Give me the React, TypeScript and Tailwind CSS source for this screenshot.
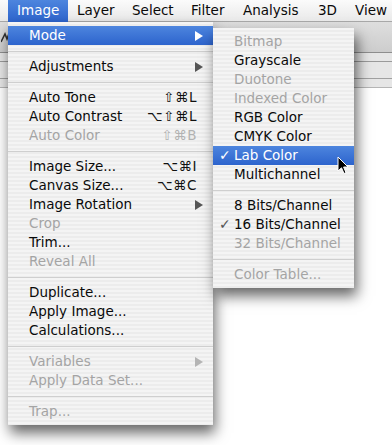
import React from "react";

type Item =
  | { sep: true }
  | {
      sep?: false;
      label: string;
      shortcut?: string;
      arrow?: boolean;
      disabled?: boolean;
      active?: boolean;
      check?: boolean;
    };

const mainItems: Item[] = [
  { label: "Mode", arrow: true, active: true },
  { sep: true },
  { label: "Adjustments", arrow: true },
  { sep: true },
  { label: "Auto Tone", shortcut: "⇧⌘L" },
  { label: "Auto Contrast", shortcut: "⌥⇧⌘L" },
  { label: "Auto Color", shortcut: "⇧⌘B", disabled: true },
  { sep: true },
  { label: "Image Size...", shortcut: "⌥⌘I" },
  { label: "Canvas Size...", shortcut: "⌥⌘C" },
  { label: "Image Rotation", arrow: true },
  { label: "Crop", disabled: true },
  { label: "Trim..." },
  { label: "Reveal All", disabled: true },
  { sep: true },
  { label: "Duplicate..." },
  { label: "Apply Image..." },
  { label: "Calculations..." },
  { sep: true },
  { label: "Variables", arrow: true, disabled: true },
  { label: "Apply Data Set...", disabled: true },
  { sep: true },
  { label: "Trap...", disabled: true },
];

const subItems: Item[] = [
  { label: "Bitmap", disabled: true },
  { label: "Grayscale" },
  { label: "Duotone", disabled: true },
  { label: "Indexed Color", disabled: true },
  { label: "RGB Color" },
  { label: "CMYK Color" },
  { label: "Lab Color", active: true, check: true },
  { label: "Multichannel" },
  { sep: true },
  { label: "8 Bits/Channel" },
  { label: "16 Bits/Channel", check: true },
  { label: "32 Bits/Channel", disabled: true },
  { sep: true },
  { label: "Color Table...", disabled: true },
];

function Arrow({ color }: { color: string }) {
  return (
    <svg width="8" height="10" viewBox="0 0 8 10" className="shrink-0">
      <polygon points="0,0 8,5 0,10" fill={color} />
    </svg>
  );
}

function Row({ item }: { item: Item }) {
  if (item.sep) {
    return (
      <div className="h-[12px] flex items-center">
        <div className="h-px w-full bg-[#cfcfcf]" />
      </div>
    );
  }
  const textColor = item.active
    ? "text-white"
    : item.disabled
    ? "text-[#a4a4a4]"
    : "text-[#0a0a0a]";
  return (
    <div
      className={
        "relative h-[19px] leading-[19px] flex items-center pl-[21px] " +
        (item.active
          ? "bg-[linear-gradient(to_bottom,#4d85de,#2d64cd)] "
          : "") +
        textColor
      }
    >
      {item.check ? (
        <span
          className={
            "absolute left-[6px] top-0 text-[14px] font-bold " +
            (item.active ? "text-white" : "text-[#555]")
          }
        >
          ✓
        </span>
      ) : null}
      <span className="flex-1 whitespace-nowrap">{item.label}</span>
      {item.shortcut ? (
        <span
          className={
            "pr-[16px] whitespace-nowrap tracking-[0.5px] " +
            (item.disabled ? "text-[#b2b2b2]" : "text-[#111]")
          }
        >
          {item.shortcut}
        </span>
      ) : null}
      {item.arrow ? (
        <span className="pr-[10px] flex items-center">
          <Arrow
            color={
              item.active ? "#ffffff" : item.disabled ? "#b4b4b4" : "#555555"
            }
          />
        </span>
      ) : null}
    </div>
  );
}

const stripes =
  "bg-[repeating-linear-gradient(180deg,#f4f4f4_0px,#f4f4f4_2px,#ececec_2px,#ececec_4px)]";

export default function App() {
  const bar = [
    { t: "Image", w: "w-[60px]", active: true },
    { t: "Layer", w: "w-[55px]" },
    { t: "Select", w: "w-[59px]" },
    { t: "Filter", w: "w-[52px]" },
    { t: "Analysis", w: "w-[75px]" },
    { t: "3D", w: "w-[37px]" },
    { t: "View", w: "w-[46px]" },
  ];
  return (
    <div className="relative w-[392px] h-[445px] overflow-hidden bg-white font-['DejaVu_Sans',sans-serif] text-[13.5px]">
      {/* menu bar */}
      <div className="h-[22px] flex pl-[8px] bg-[linear-gradient(to_bottom,#fbfbfb,#e9e9e9)] border-b border-[#a8a8a8]">
        {bar.map((b) => (
          <div
            key={b.t}
            className={
              b.w +
              " shrink-0 h-[22px] leading-[21px] pl-[9px] whitespace-nowrap " +
              (b.active
                ? "bg-[linear-gradient(to_bottom,#4d85de,#2d64cd)] text-white"
                : "text-[#0a0a0a]")
            }
          >
            {b.t}
          </div>
        ))}
      </div>
      {/* toolbar background */}
      <div className="h-[31px] bg-[linear-gradient(to_bottom,#dedede,#cdcdcd)] border-b border-[#8e8e8e] flex items-center pl-[1px]">
        <svg width="10" height="14" viewBox="0 0 10 14">
          <path d="M0 12 L4 4 L6 9 L9 1" stroke="#333" strokeWidth="1.6" fill="none" />
        </svg>
      </div>
      <div className="h-[35px] bg-[#e6e6e6] border-b border-[#b5b5b5] flex flex-col">
        <div className="h-[9px] border-b border-[#9a9a9a]" />
        <div className="h-[17px] border-b border-[#a0a0a0]" />
      </div>

      {/* main menu */}
      <div
        className={
          "absolute left-[8px] top-[22px] w-[205px] pt-[4px] pb-[4px] shadow-[2px_8px_13px_rgba(0,0,0,0.6)] " +
          stripes
        }
      >
        {mainItems.map((it, i) => (
          <Row key={i} item={it} />
        ))}
      </div>

      {/* submenu */}
      <div
        className={
          "absolute left-[213px] top-[28px] w-[141px] pt-[4px] pb-[4px] shadow-[3px_8px_13px_rgba(0,0,0,0.6)] " +
          stripes
        }
      >
        {subItems.map((it, i) => (
          <Row key={i} item={it} />
        ))}
      </div>

      {/* cursor */}
      <svg
        className="absolute left-[337px] top-[156px]"
        width="13"
        height="20"
        viewBox="0 0 13 20"
      >
        <path
          d="M1 1 L1 15 L4.5 11.8 L7 17.5 L9 16.6 L6.6 11 L11 11 Z"
          fill="#000"
          stroke="#fff"
          strokeWidth="1"
          strokeLinejoin="round"
        />
      </svg>
    </div>
  );
}
